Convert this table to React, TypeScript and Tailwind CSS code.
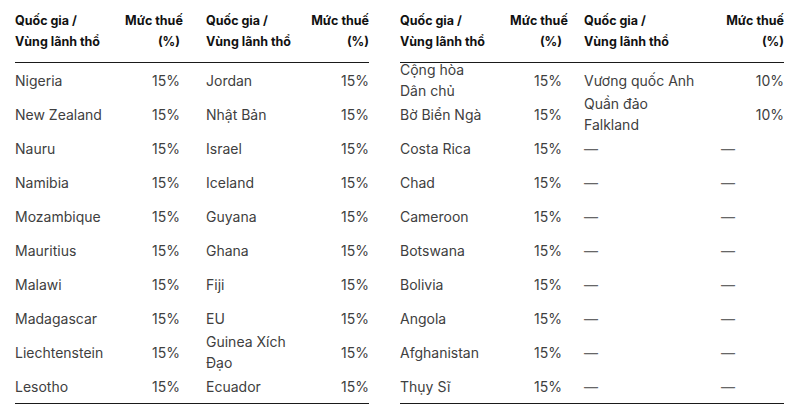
const left: [string, string, string, string][] = [
  ['Nigeria', '15%', 'Jordan', '15%'],
  ['New Zealand', '15%', 'Nhật Bản', '15%'],
  ['Nauru', '15%', 'Israel', '15%'],
  ['Namibia', '15%', 'Iceland', '15%'],
  ['Mozambique', '15%', 'Guyana', '15%'],
  ['Mauritius', '15%', 'Ghana', '15%'],
  ['Malawi', '15%', 'Fiji', '15%'],
  ['Madagascar', '15%', 'EU', '15%'],
  ['Liechtenstein', '15%', 'Guinea Xích\nĐạo', '15%'],
  ['Lesotho', '15%', 'Ecuador', '15%'],
]

const right: [string, string, string, string][] = [
  ['Cộng hòa\nDân chủ', '15%', 'Vương quốc Anh', '10%'],
  ['Bờ Biển Ngà', '15%', 'Quần đảo\nFalkland', '10%'],
  ['Costa Rica', '15%', '—', '—'],
  ['Chad', '15%', '—', '—'],
  ['Cameroon', '15%', '—', '—'],
  ['Botswana', '15%', '—', '—'],
  ['Bolivia', '15%', '—', '—'],
  ['Angola', '15%', '—', '—'],
  ['Afghanistan', '15%', '—', '—'],
  ['Thụy Sĩ', '15%', '—', '—'],
]

function Header({ cols, padCol3 }: { cols: string; padCol3: string }) {
  return (
    <div className={`grid ${cols} grid-rows-[62px] items-center border-b border-[#1a1a1a] text-[12.5px] font-bold leading-[21px] text-[#111]`}>
      <div className="whitespace-pre">{'Quốc gia /\nVùng lãnh thổ'}</div>
      <div className="whitespace-pre text-right">{'Mức thuế\n(%)'}</div>
      <div className={`whitespace-pre ${padCol3}`}>{'Quốc gia /\nVùng lãnh thổ'}</div>
      <div className="whitespace-pre text-right">{'Mức thuế\n(%)'}</div>
    </div>
  )
}

function Table({
  rows,
  cols,
  padCol3,
  width,
  dashPad,
}: {
  rows: [string, string, string, string][]
  cols: string
  padCol3: string
  width: string
  dashPad: string
}) {
  return (
    <div className={`${width} px-[4px]`}>
      <Header cols={cols} padCol3={padCol3} />
      <div className="border-b border-[#1a1a1a]">
        {rows.map((r, i) => (
          <div key={i} className={`grid ${cols} grid-rows-[34px] items-center text-[14px] leading-[21px] text-[#404040]`}>
            <div className="whitespace-pre">{r[0]}</div>
            <div className="text-right">{r[1]}</div>
            {r[2] === '—' ? (
              <div className={`${padCol3} text-[#666]`}>—</div>
            ) : (
              <div className={`whitespace-pre ${padCol3}`}>{r[2]}</div>
            )}
            {r[3] === '—' ? (
              <div className={`${dashPad} text-[#666]`}>—</div>
            ) : (
              <div className="text-right">{r[3]}</div>
            )}
          </div>
        ))}
      </div>
    </div>
  )
}

export default function App() {
  return (
    <div className="flex h-[409px] w-[809px] gap-[23px] bg-white pl-[11px] font-['Inter','Liberation_Sans',sans-serif]">
      <Table
        rows={left}
        width="w-[362px]"
        cols="grid-cols-[110px_55px_1fr_60px]"
        padCol3="pl-[26px]"
        dashPad="pl-0"
      />
      <Table
        rows={right}
        width="w-[392px]"
        cols="grid-cols-[110px_52px_1fr_67px]"
        padCol3="pl-[22px]"
        dashPad="pl-[4px]"
      />
    </div>
  )
}
